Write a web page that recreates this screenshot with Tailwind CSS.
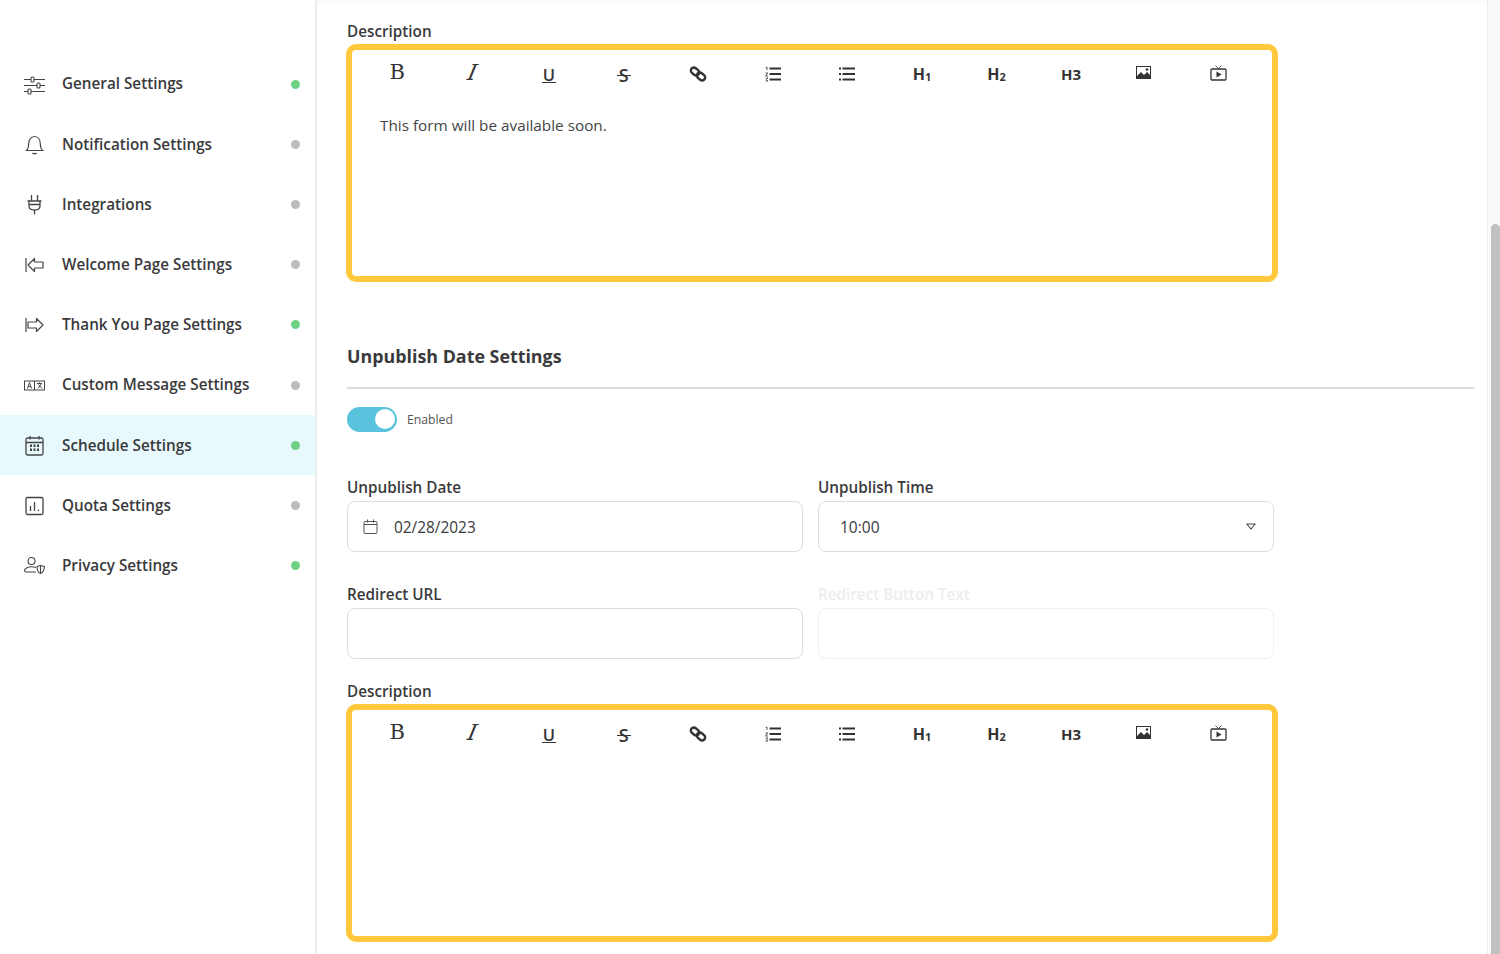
<!DOCTYPE html>
<html lang="en">
<head>
<meta charset="UTF-8" />
<title>Schedule Settings</title>
<script src="https://cdn.jsdelivr.net/npm/@tailwindcss/browser@4"></script>
</head>
<body class="h-[954px] w-[1500px] overflow-hidden bg-white font-['Open_Sans',sans-serif] text-[#3a3a3c]">
<div class="flex h-[954px]">
  <!-- sidebar -->
  <aside class="w-[317px] shrink-0 border-r-2 border-[#ececec] pt-[54px]">
    <a class="flex h-[60.2px] items-center pl-[24px] pr-[15px]">
      <svg class="w-[21px] h-[21px] shrink-0" viewBox="0 0 21 21" fill="none" stroke="#444" stroke-width="1.1"><path d="M0 5.5h7M10 5.5h11M0 11.5h13M16 11.5h5M0 17.5h4M7 17.5h14"/><rect x="7" y="3" width="3" height="5" rx="1"/><rect x="13" y="9" width="3" height="5" rx="1"/><rect x="4" y="15" width="3" height="5" rx="1"/></svg>
      <span class="ml-[17px] flex-1 text-[15.25px] font-[550] leading-none">General Settings</span>
      <span class="w-[9px] h-[9px] rounded-full bg-[#6fd184]"></span>
    </a>
    <a class="flex h-[60.2px] items-center pl-[24px] pr-[15px]">
      <svg class="w-[21px] h-[21px] shrink-0" viewBox="0 0 21 21" fill="none" stroke="#444" stroke-width="1.2"><path d="M2.5 16.5c1.500-1.500 2.200-3 2.200-6.500 0-4 2-7.500 5.800-7.500s5.800 3.500 5.800 7.500c0 3.500.7 5 2.200 6.500z"/><path d="M8.500 19c1 1.200 3 1.200 4 0"/></svg>
      <span class="ml-[17px] flex-1 text-[15.25px] font-[550] leading-none">Notification Settings</span>
      <span class="w-[9px] h-[9px] rounded-full bg-[#bdbdbd]"></span>
    </a>
    <a class="flex h-[60.2px] items-center pl-[24px] pr-[15px]">
      <svg class="w-[21px] h-[21px] shrink-0" viewBox="0 0 21 21" fill="none" stroke="#444" stroke-width="1.3"><path d="M7.5 1v6M13.5 1v6M3.500 7h14M4.500 10.500h12M5 7v5c0 2.500 2.500 4 5.500 4s5.500-1.500 5.500-4V7M10.500 16v4.500"/></svg>
      <span class="ml-[17px] flex-1 text-[15.25px] font-[550] leading-none">Integrations</span>
      <span class="w-[9px] h-[9px] rounded-full bg-[#bdbdbd]"></span>
    </a>
    <a class="flex h-[60.2px] items-center pl-[24px] pr-[15px]">
      <svg class="w-[21px] h-[21px] shrink-0" viewBox="0 0 21 21" fill="none" stroke="#444" stroke-width="1.2"><path d="M2 4v14M4 11l6.500-6.500v3.500h8.500v6h-8.500v3.500z" stroke-linejoin="round"/></svg>
      <span class="ml-[17px] flex-1 text-[15.25px] font-[550] leading-none">Welcome Page Settings</span>
      <span class="w-[9px] h-[9px] rounded-full bg-[#bdbdbd]"></span>
    </a>
    <a class="flex h-[60.2px] items-center pl-[24px] pr-[15px]">
      <svg class="w-[21px] h-[21px] shrink-0" viewBox="0 0 21 21" fill="none" stroke="#444" stroke-width="1.2"><path d="M2 4v14M19 11l-6.500-6.500v3.500H4v6h8.500v3.500z" stroke-linejoin="round"/></svg>
      <span class="ml-[17px] flex-1 text-[15.25px] font-[550] leading-none">Thank You Page Settings</span>
      <span class="w-[9px] h-[9px] rounded-full bg-[#6fd184]"></span>
    </a>
    <a class="flex h-[60.2px] items-center pl-[24px] pr-[15px]">
      <svg class="w-[21px] h-[21px] shrink-0" viewBox="0 0 21 21" fill="none" stroke="#444" stroke-width="1"><rect x=".5" y="6" width="20" height="9"/><path d="M10.500 6v9M3.500 13.500l2-6 2 6M4.300 11.500h2.400M13 8.500h5M15.500 7.500v1M14 13.500l3.500-5M14.500 9.500l3.500 4"/></svg>
      <span class="ml-[17px] flex-1 text-[15.25px] font-[550] leading-none">Custom Message Settings</span>
      <span class="w-[9px] h-[9px] rounded-full bg-[#bdbdbd]"></span>
    </a>
    <a class="flex h-[60.2px] items-center pl-[24px] pr-[15px] bg-[#e8f9fd]">
      <svg class="w-[21px] h-[21px] shrink-0" viewBox="0 0 21 21" fill="none" stroke="#444" stroke-width="1.3"><rect x="2" y="3" width="17" height="17" rx="1.500"/><path d="M2 7.500h17M6 1v3.500M15 1v3.500"/><path d="M6 10.800h2M9.500 10.800h2M13 10.800h2M6 14.800h2M9.500 14.800h2M13 14.800h2" stroke-width="2.400"/></svg>
      <span class="ml-[17px] flex-1 text-[15.25px] font-[550] leading-none">Schedule Settings</span>
      <span class="w-[9px] h-[9px] rounded-full bg-[#6fd184]"></span>
    </a>
    <a class="flex h-[60.2px] items-center pl-[24px] pr-[15px]">
      <svg class="w-[21px] h-[21px] shrink-0" viewBox="0 0 21 21" fill="none" stroke="#444" stroke-width="1.3"><rect x="2" y="2.500" width="17" height="17" rx="1.500"/><path d="M6.500 11v5M10.500 7v9M14.500 14.500V16"/></svg>
      <span class="ml-[17px] flex-1 text-[15.25px] font-[550] leading-none">Quota Settings</span>
      <span class="w-[9px] h-[9px] rounded-full bg-[#bdbdbd]"></span>
    </a>
    <a class="flex h-[60.2px] items-center pl-[24px] pr-[15px]">
      <svg class="w-[21px] h-[21px] shrink-0" viewBox="0 0 21 21" fill="none" stroke="#444" stroke-width="1.1"><circle cx="7.500" cy="6" r="3.500"/><path d="M12 12.500c-1.300-.5-2.800-.7-4.500-.7C3.500 11.800.5 13.500.5 15.500c0 1 .7 1.500 1.500 1.500h10"/><path d="M13 11.500l3.500-1 3.800 1c0 4-1 6-3.800 7-2.600-1-3.500-3-3.500-7zM16.500 10.500v8"/></svg>
      <span class="ml-[17px] flex-1 text-[15.25px] font-[550] leading-none">Privacy Settings</span>
      <span class="w-[9px] h-[9px] rounded-full bg-[#6fd184]"></span>
    </a>
  </aside>

  <!-- main -->
  <main class="w-[1170px] shrink-0 pl-[30px] pr-[13px] pt-[19px] border-t-[3px] border-[#fafafa]">
    <label class="block -mt-[3px] text-[15.25px] font-[550] leading-6">Description</label>
    <div class="-ml-[1px] mt-[1px] h-[238px] w-[932px] rounded-[10px] border-[6px] border-[#ffc83d]">
      <div class="flex h-[48px] items-center pl-[8px] text-[#333]">
        <span class="flex w-[74.6px] justify-center font-['DejaVu_Serif',serif] text-[21px] leading-none -mt-[3px]">B</span>
        <span class="flex w-[74.6px] justify-center font-['DejaVu_Serif',serif] italic text-[22px] leading-none -mt-[3px]"><span class="-skew-x-12">I</span></span>
        <span class="ml-[2.5px] flex w-[74.6px] justify-center pt-[2px]"><span class="border-b-[1.5px] border-[#333] px-[1px] text-[16.5px] font-semibold leading-[15px]">U</span></span>
        <span class="flex w-[74.6px] justify-center pt-[1px]"><span class="relative text-[18px] font-semibold leading-[16px]">S<span class="absolute -left-[2px] -right-[2px] top-[8px] h-[1.5px] bg-[#333]"></span></span></span>
        <span class="flex w-[74.6px] justify-center"><svg class="w-[18px] h-[18px]" viewBox="0 0 18 18" fill="none" stroke="#333" stroke-width="2.4"><rect x="1.500" y="3.500" width="9" height="6" rx="3" transform="rotate(40 6 6.500)"/><rect x="7.500" y="8.500" width="9" height="6" rx="3" transform="rotate(40 12 11.500)"/></svg></span>
        <span class="flex w-[74.6px] justify-center"><svg class="w-[16px] h-[16px]" viewBox="0 0 16 16" fill="none" stroke="#333"><path d="M4.500 2.500H16M4.500 8H16M4.500 13.500H16" stroke-width="2"/><path d="M.7 1.500L2 1v3M.5 7h2.300L.5 10h2.500M.5 12h2.500L1.500 13.500 3 15H.5" stroke-width=".8"/></svg></span>
        <span class="flex w-[74.6px] justify-center"><svg class="w-[16px] h-[16px]" viewBox="0 0 16 16" fill="none" stroke="#333" stroke-width="2"><path d="M3.500 2.500H16M3.500 8H16M3.500 13.500H16M0 2.500h2M0 8h2M0 13.500h2"/></svg></span>
        <span class="flex w-[74.6px] justify-center font-bold text-[16px] leading-none">H<span class="text-[11px] font-bold self-end">1</span></span>
        <span class="flex w-[74.6px] justify-center font-bold text-[16px] leading-none">H<span class="text-[11px] font-bold self-end">2</span></span>
        <span class="flex w-[74.6px] justify-center font-bold text-[15px] leading-none">H3</span>
        <span class="flex w-[71px] justify-center -mt-[3px]"><svg class="w-[15px] h-[13px]" viewBox="0 0 15 13"><path fill="#333" d="M0 0h15v13H0z"/><path fill="#fff" d="M1 1h13v8l-3-3-3 3-3-3-4 4z"/><circle cx="11" cy="3.500" r="1.300" fill="#333"/></svg></span>
        <span class="flex w-[78px] justify-center -mt-[2px]"><svg class="w-[17px] h-[16px]" viewBox="0 0 17 16" fill="none" stroke="#333" stroke-width="1.300"><rect x="1" y="4" width="15" height="11" rx="1"/><path d="M5.500 .5l3 3 3-3" stroke-width=".8"/><path fill="#333" stroke="none" d="M6.500 6.500l5 3-5 3z"/></svg></span>
      </div>
      <p class="pl-[28px] pt-[15px] text-[15.3px] leading-6 text-[#444]">This form will be available soon.</p>
    </div>

    <h2 class="mt-[61px] text-[17.85px] font-bold leading-[26px]">Unpublish Date Settings</h2>
    <div class="mt-[18px] h-[1.5px] bg-[#dcdcdc]"></div>
    <div class="mt-[18px] flex items-center">
      <span class="flex h-[25px] w-[50px] items-center justify-end rounded-full bg-[#59c3de] pr-[2px]"><span class="h-[20px] w-[20px] rounded-full bg-white"></span></span>
      <span class="ml-[10px] pt-[2px] text-[12.2px] leading-none text-[#555]">Enabled</span>
    </div>

    <div class="mt-[43px] grid w-[927px] grid-cols-[456px_456px] gap-x-[15px]">
      <div>
        <label class="block text-[15.25px] font-[550] leading-6">Unpublish Date</label>
        <div class="mt-[2px] flex h-[51px] items-center rounded-[8px] border border-[#dcdcdc] pl-[15px] text-[15.4px]">
          <svg class="w-[15px] h-[15px]" viewBox="0 0 15 15" fill="none" stroke="#555" stroke-width="1"><rect x="1" y="2.500" width="13" height="12" rx="1"/><path d="M1 5.500h13M4.500 .5v3M10.500 .5v3"/></svg>
          <span class="ml-[16px] pt-[3px]">02/28/2023</span>
        </div>
      </div>
      <div>
        <label class="block text-[15.25px] font-[550] leading-6">Unpublish Time</label>
        <div class="mt-[2px] flex h-[51px] items-center justify-between rounded-[8px] border border-[#dcdcdc] pl-[21px] pr-[17px] text-[15.5px]">
          <span class="pt-[3px]">10:00</span>
          <svg class="w-[10px] h-[7px]" viewBox="0 0 10 7" fill="none" stroke="#444" stroke-width="1.1"><path d="M.8 1h8.400L5 6z" stroke-linejoin="round"/></svg>
        </div>
      </div>
      <div class="mt-[30px]">
        <label class="block text-[15.25px] font-[550] leading-6">Redirect URL</label>
        <div class="mt-[2px] h-[51px] rounded-[8px] border border-[#dcdcdc]"></div>
      </div>
      <div class="mt-[30px]">
        <label class="block text-[15.25px] font-[550] leading-6 text-[#ededed]">Redirect Button Text</label>
        <div class="mt-[2px] h-[51px] rounded-[8px] border border-[#f0f0f0]"></div>
      </div>
    </div>

    <label class="mt-[20.5px] block text-[15.25px] font-[550] leading-6">Description</label>
    <div class="-ml-[1px] mt-[1px] h-[238px] w-[932px] rounded-[10px] border-[6px] border-[#ffc83d]">
      <div class="flex h-[48px] items-center pl-[8px] text-[#333]">
        <span class="flex w-[74.6px] justify-center font-['DejaVu_Serif',serif] text-[21px] leading-none -mt-[3px]">B</span>
        <span class="flex w-[74.6px] justify-center font-['DejaVu_Serif',serif] italic text-[22px] leading-none -mt-[3px]"><span class="-skew-x-12">I</span></span>
        <span class="ml-[2.5px] flex w-[74.6px] justify-center pt-[2px]"><span class="border-b-[1.5px] border-[#333] px-[1px] text-[16.5px] font-semibold leading-[15px]">U</span></span>
        <span class="flex w-[74.6px] justify-center pt-[1px]"><span class="relative text-[18px] font-semibold leading-[16px]">S<span class="absolute -left-[2px] -right-[2px] top-[8px] h-[1.5px] bg-[#333]"></span></span></span>
        <span class="flex w-[74.6px] justify-center"><svg class="w-[18px] h-[18px]" viewBox="0 0 18 18" fill="none" stroke="#333" stroke-width="2.4"><rect x="1.500" y="3.500" width="9" height="6" rx="3" transform="rotate(40 6 6.500)"/><rect x="7.500" y="8.500" width="9" height="6" rx="3" transform="rotate(40 12 11.500)"/></svg></span>
        <span class="flex w-[74.6px] justify-center"><svg class="w-[16px] h-[16px]" viewBox="0 0 16 16" fill="none" stroke="#333"><path d="M4.500 2.500H16M4.500 8H16M4.500 13.500H16" stroke-width="2"/><path d="M.7 1.500L2 1v3M.5 7h2.300L.5 10h2.500M.5 12h2.500L1.500 13.500 3 15H.5" stroke-width=".8"/></svg></span>
        <span class="flex w-[74.6px] justify-center"><svg class="w-[16px] h-[16px]" viewBox="0 0 16 16" fill="none" stroke="#333" stroke-width="2"><path d="M3.500 2.500H16M3.500 8H16M3.500 13.500H16M0 2.500h2M0 8h2M0 13.500h2"/></svg></span>
        <span class="flex w-[74.6px] justify-center font-bold text-[16px] leading-none">H<span class="text-[11px] font-bold self-end">1</span></span>
        <span class="flex w-[74.6px] justify-center font-bold text-[16px] leading-none">H<span class="text-[11px] font-bold self-end">2</span></span>
        <span class="flex w-[74.6px] justify-center font-bold text-[15px] leading-none">H3</span>
        <span class="flex w-[71px] justify-center -mt-[3px]"><svg class="w-[15px] h-[13px]" viewBox="0 0 15 13"><path fill="#333" d="M0 0h15v13H0z"/><path fill="#fff" d="M1 1h13v8l-3-3-3 3-3-3-4 4z"/><circle cx="11" cy="3.500" r="1.300" fill="#333"/></svg></span>
        <span class="flex w-[78px] justify-center -mt-[2px]"><svg class="w-[17px] h-[16px]" viewBox="0 0 17 16" fill="none" stroke="#333" stroke-width="1.300"><rect x="1" y="4" width="15" height="11" rx="1"/><path d="M5.500 .5l3 3 3-3" stroke-width=".8"/><path fill="#333" stroke="none" d="M6.500 6.500l5 3-5 3z"/></svg></span>
      </div>
    </div>
  </main>

  <!-- scrollbar -->
  <div class="relative w-[13px] shrink-0 border-l border-[#ececec] bg-[#fafafa]">
    <div class="absolute right-0 top-[224px] bottom-0 w-[9px] rounded-t-full bg-[#c1c1c1]"></div>
  </div>
</div>
</body>
</html>
